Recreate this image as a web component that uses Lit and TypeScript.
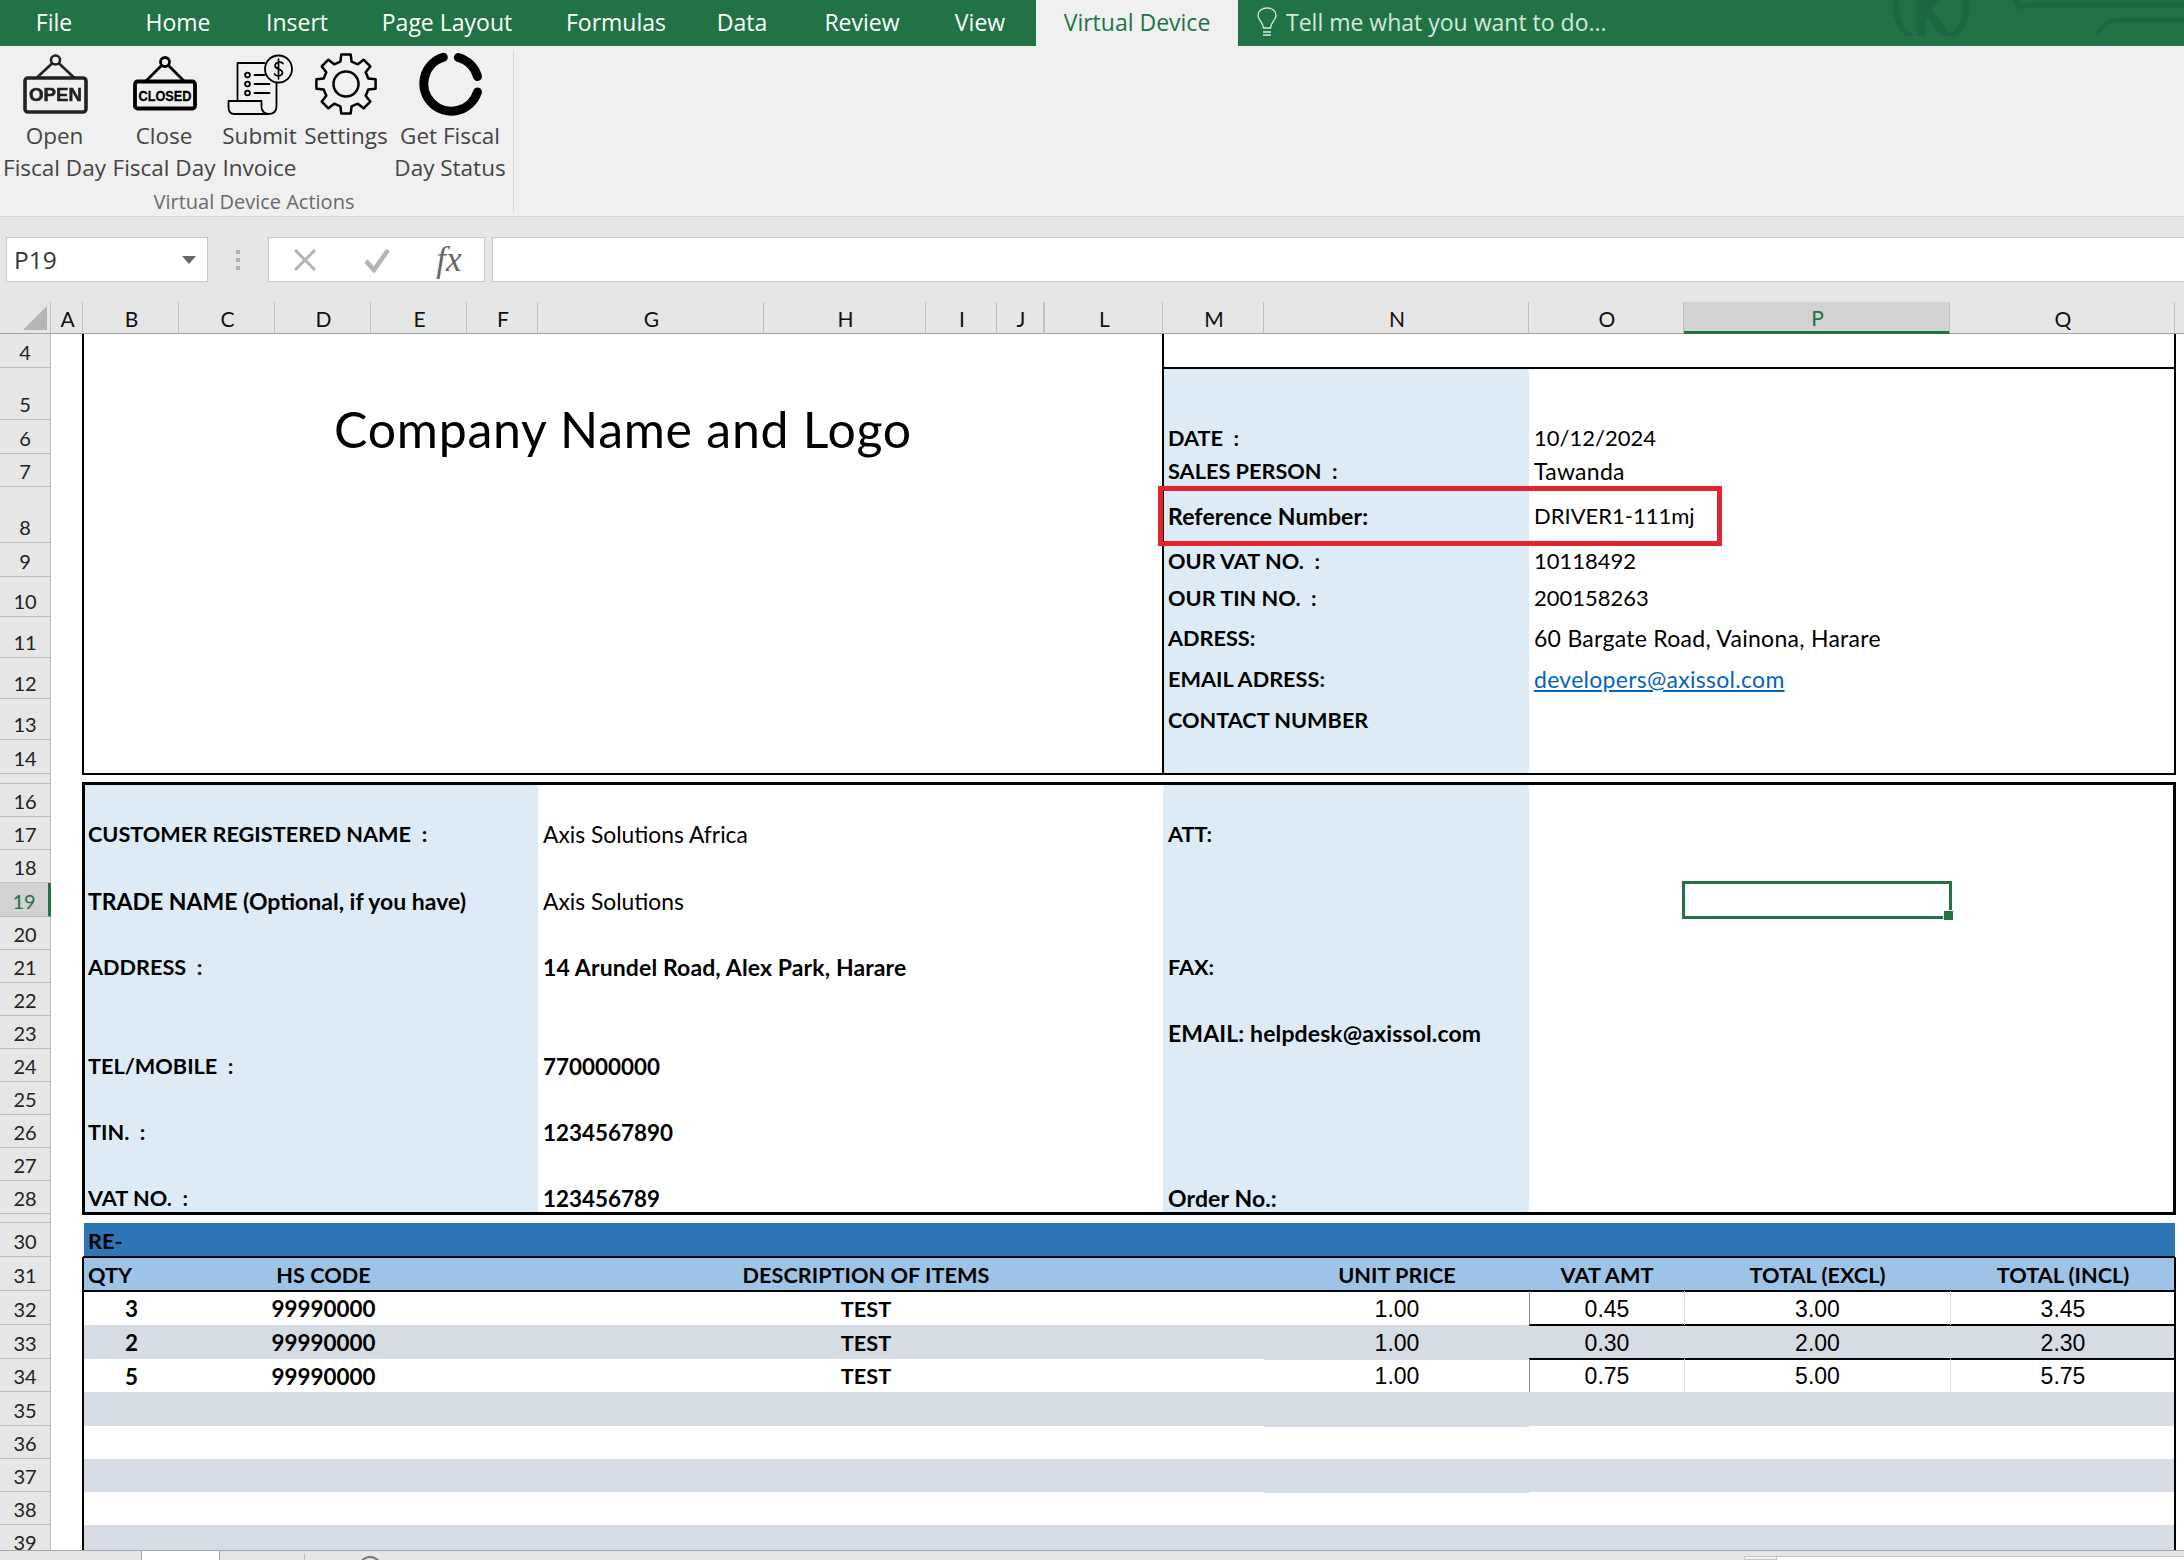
import { LitElement, html, css, svg } from "lit";
import { customElement } from "lit/decorators.js";

const COLS: [string, number][] = [
  ["A", 32], ["B", 96], ["C", 96], ["D", 96], ["E", 96], ["F", 71], ["G", 226], ["H", 162],
  ["I", 71], ["J", 47], ["L", 119], ["M", 101], ["N", 265], ["O", 155], ["P", 266], ["Q", 225],
];
const ROWS: [number, number][] = [
  [4, 34], [5, 52], [6, 34], [7, 33], [8, 56], [9, 34], [10, 40], [11, 41], [12, 41], [13, 41], [14, 34], [15, 10],
  [16, 33], [17, 33], [18, 33], [19, 34], [20, 33], [21, 33], [22, 33], [23, 33], [24, 33], [25, 33], [26, 33], [27, 33], [28, 33],
  [29, 9], [30, 34], [31, 34], [32, 34], [33, 34], [34, 33], [35, 34], [36, 33], [37, 33], [38, 33], [39, 33],
];
const C = (l: string) => COLS.findIndex((c) => c[0] === l) + 2;
const R = (n: number) => ROWS.findIndex((r) => r[0] === n) + 2;
const area = (c1: string, c2: string, r1: number, r2: number = r1) =>
  `grid-area:${R(r1)}/${C(c1)}/${R(r2) + 1}/${C(c2) + 1}`;
const cell = (c1: string, c2: string, r1: number, r2: number, cls: string, content: unknown = "") =>
  html`<div class=${cls} style=${area(c1, c2, r1, r2)}>${content}</div>`;
/* Calibri sets lowercase wider and capitals narrower than Lato: pick a size per text. */
const fit = (s: string) => {
  const lower = (s.match(/[a-z]/g) || []).length;
  const upper = (s.match(/[A-Z]/g) || []).length;
  if (lower + upper === 0) return "";
  return lower / (lower + upper) >= 1 / 3 ? "lc" : "caps";
};
const txt = (c1: string, c2: string, r: number, cls: string, s: string) =>
  cell(c1, c2, r, r, `t ${fit(s)} ${cls}`, s);

const TABS: [string, number][] = [
  ["File", 108], ["Home", 140], ["Insert", 98], ["Page Layout", 202], ["Formulas", 136],
  ["Data", 116], ["Review", 124], ["View", 112],
];

const gearPath = (() => {
  const cx = 346, cy = 84, ro = 30, rr = 23;
  const pts: string[] = [];
  for (let i = 0; i < 8; i++) {
    const a = -90 + i * 45;
    for (const [r, d] of [[rr, -14], [ro, -9], [ro, 9], [rr, 14]] as [number, number][]) {
      const t = ((a + d) * Math.PI) / 180;
      pts.push(`${(cx + r * Math.cos(t)).toFixed(1)} ${(cy + r * Math.sin(t)).toFixed(1)}`);
    }
  }
  return "M" + pts.join("L") + "Z";
})();

const iconOpen = svg`<svg class="ic blur" viewBox="19.5 50 70 70">
  <circle cx="55" cy="60" r="4.5" fill="none" stroke="#222" stroke-width="2.6"/>
  <path d="M52 63 36 78M58 63 74 78" stroke="#222" stroke-width="2.6" fill="none"/>
  <rect x="24.5" y="78" width="61" height="34" rx="3" fill="none" stroke="#222" stroke-width="3.6"/>
  <text x="55" y="100.500" text-anchor="middle" class="sign" textLength="53" lengthAdjust="spacingAndGlyphs" font-size="18" fill="#222" stroke="#222" stroke-width="0.5">OPEN</text>
</svg>`;
const iconClosed = svg`<svg class="ic" viewBox="129 50 70 70">
  <circle cx="165" cy="62" r="4.5" fill="none" stroke="#000" stroke-width="2.8"/>
  <path d="M162 65 146 81M168 65 184 81" stroke="#000" stroke-width="2.8" fill="none"/>
  <rect x="135" y="81.500" width="60" height="27" rx="2.5" fill="none" stroke="#000" stroke-width="3.8"/>
  <text x="165" y="100.500" text-anchor="middle" class="sign" textLength="53" lengthAdjust="spacingAndGlyphs" font-size="15.5" fill="#000" stroke="#000" stroke-width="0.3">CLOSED</text>
</svg>`;
const iconInvoice = svg`<svg class="ic" viewBox="224.500 50 70 70" fill="none" stroke="#000" stroke-width="1.8" stroke-linecap="round" stroke-linejoin="round">
  <path d="M237 101V63H264"/>
  <path d="M276 83V106C276 111 273 114 268 114H234C230 114 228 111 228 107V101H261V107C261 111 264 114 268 114"/>
  <circle cx="278" cy="69" r="13.500"/>
  <path d="M282.500 63.500C281 61.500 275 61.500 274.500 65.500 274 69.500 282.500 68.500 282 73 281.500 76.500 275 76.500 274 74M278 59V79" stroke-width="1.7"/>
  <circle cx="247" cy="75" r="2.4"/><circle cx="247" cy="84" r="2.4"/><circle cx="247" cy="93" r="2.4"/>
  <path d="M254 75H264M254 84H269M254 93H269"/>
</svg>`;
const iconGear = svg`<svg class="ic" viewBox="311 50 70 70" fill="none" stroke="#000" stroke-width="2.5" stroke-linejoin="round">
  <path d=${gearPath}/>
  <circle cx="346" cy="84" r="12.500"/>
</svg>`;
const iconRing = svg`<svg class="ic" viewBox="415 50 70 70" fill="none" stroke="#000" stroke-width="9" stroke-linecap="round">
  <path d="M443.300 57.300A27.500 27.500 0 1 0 477.500 92"/>
  <path d="M458.300 57.500A27.500 27.500 0 0 1 477.500 76.500"/>
</svg>`;

const BTNS: { w: number; icon: unknown; lines: string[] }[] = [
  { w: 109, icon: iconOpen, lines: ["Open", "Fiscal Day"] },
  { w: 110, icon: iconClosed, lines: ["Close", "Fiscal Day"] },
  { w: 81, icon: iconInvoice, lines: ["Submit", "Invoice"] },
  { w: 92, icon: iconGear, lines: ["Settings", ""] },
  { w: 116, icon: iconRing, lines: ["Get Fiscal", "Day Status"] },
];

const RIGHT: [number, string, string][] = [
  [6, "DATE  :", "10/12/2024"],
  [7, "SALES PERSON  :", "Tawanda"],
  [8, "Reference Number:", "DRIVER1-111mj"],
  [9, "OUR VAT NO.  :", "10118492"],
  [10, "OUR TIN NO.  :", "200158263"],
  [11, "ADRESS:", "60 Bargate Road, Vainona, Harare"],
  [13, "CONTACT NUMBER", ""],
];
const CUST: [number, string, string, boolean][] = [
  [17, "CUSTOMER REGISTERED NAME  :", "Axis Solutions Africa", false],
  [19, "TRADE NAME (Optional, if you have)", "Axis Solutions", false],
  [21, "ADDRESS  :", "14 Arundel Road, Alex Park, Harare", true],
  [24, "TEL/MOBILE  :", "770000000", true],
  [26, "TIN.  :", "1234567890", true],
  [28, "VAT NO.  :", "123456789", true],
];
const CUST_R: [number, string][] = [
  [17, "ATT:"], [21, "FAX:"], [23, "EMAIL: helpdesk@axissol.com"], [28, "Order No.:"],
];
const ITEMS: [number, string, string, string, string, string][] = [
  [32, "3", "1.00", "0.45", "3.00", "3.45"],
  [33, "2", "1.00", "0.30", "2.00", "2.30"],
  [34, "5", "1.00", "0.75", "5.00", "5.75"],
];

@customElement("app-root")
export class AppRoot extends LitElement {
  static styles = css`
    :host { display: block; width: 2184px; height: 1560px; overflow: hidden; background: #fff; font-family: "Lato", sans-serif; color: #000; }
    .tabs { height: 46px; background: #217346; display: flex; position: relative; overflow: hidden; font-family: "Open Sans", sans-serif; font-size: 23px; color: #fff; }
    .tab { display: flex; align-items: center; justify-content: center; white-space: nowrap; padding-bottom: 2px; box-sizing: border-box; }
    .tab.active { width: 202px; background: #f0f0f0; color: #217346; }
    .tell { display: flex; align-items: center; gap: 8px; padding-left: 18px; color: #d5e7dc; padding-bottom: 2px; white-space: nowrap; }
    .tell svg { width: 22px; height: 30px; flex: none; }
    .mark { position: absolute; right: 0; top: 0; width: 300px; height: 36px; }
    .ribbon { height: 171px; box-sizing: border-box; background: #f0f0f0; border-bottom: 1px solid #d6d6d6; padding-top: 4px; display: flex; }
    .group { width: 508px; padding-right: 5px; height: 163px; border-right: 1px solid #d9d9d9; display: flex; flex-direction: column; font-family: "Open Sans", sans-serif; }
    .btns { display: flex; height: 133px; }
    .btn { display: flex; flex-direction: column; align-items: center; font-size: 22.5px; color: #444; white-space: nowrap; line-height: 32px; }
    .ic { width: 70px; height: 70px; display: block; flex: none; overflow: visible; }
    .blur { filter: blur(0.7px); }
    .sign { font-family: "Liberation Sans", sans-serif; font-weight: 700; }
    .glabel { text-align: center; font-size: 20px; color: #6a6a6a; line-height: 24px; margin-top: 7px; white-space: nowrap; }
    .fbar { height: 85px; box-sizing: border-box; background: #e6e6e6; display: flex; padding: 20px 0 20px 6px; align-items: stretch; }
    .namebox { width: 202px; box-sizing: border-box; background: #fff; border: 1px solid #c8c8c8; display: flex; align-items: center; justify-content: space-between; padding: 0 11px 0 7px; font-family: "Open Sans", sans-serif; font-size: 24.5px; color: #333; }
    .caret { width: 0; height: 0; border-left: 7px solid transparent; border-right: 7px solid transparent; border-top: 8px solid #666; }
    .dots { width: 60px; display: flex; flex-direction: column; align-items: center; justify-content: center; gap: 4px; }
    .dots i { width: 4px; height: 4px; background: #b0b0b0; display: block; }
    .fbtns { width: 217px; box-sizing: border-box; background: #fff; border: 1px solid #c8c8c8; display: grid; grid-template-columns: repeat(3, 72px); justify-items: center; align-items: center; }
    .fbtns svg { width: 26px; height: 26px; }
    .fx { font-family: "Liberation Serif", serif; font-style: italic; font-size: 35px; color: #666; line-height: 40px; }
    .finput { flex: 1; margin-left: 7px; background: #fff; border: 1px solid #c8c8c8; border-right: 0; }
    .sheet { display: grid; width: 2184px; height: 1248px; overflow: hidden; background: #fff; position: relative; }
    .corner { background: #e6e6e6; border-bottom: 1px solid #a0a0a0; border-right: 1px solid #c0c0c0; display: flex; justify-content: flex-end; align-items: flex-end; padding: 0 3px 3px 0; box-sizing: border-box; }
    .tri { width: 0; height: 0; border-left: 24px solid transparent; border-bottom: 24px solid #b4b4b4; }
    .ch { background: #e6e6e6; border-bottom: 1px solid #a0a0a0; border-right: 1px solid #c0c0c0; box-sizing: border-box; display: flex; align-items: center; justify-content: center; font-size: 21px; color: #111; padding-left: 2px; padding-top: 1px; }
    .ch.sel { background: #d2d2d2; color: #217346; border-bottom: 3px solid #217346; }
    .ch.fill { border-right: 0; }
    .ch.dbl { border-left: 1px solid #c0c0c0; }
    .rh { background: #e6e6e6; border-bottom: 1px solid #bcbcbc; border-right: 1px solid #bcbcbc; box-sizing: border-box; display: flex; align-items: flex-end; justify-content: center; font-size: 20px; line-height: 24px; padding-bottom: 3px; color: #222; }
    .rh.sel { background: #d2d2d2; color: #217346; border-right: 3px solid #217346; }
    .rh.tiny { padding: 0; }
    .blue { background: #ddebf7; }
    .lines { pointer-events: none; border: 0 solid #000; }
    .bl-left { border-left-width: 2px; border-bottom-width: 2px; margin: 0 0 -1px -1px; }
    .bl-right { border-left-width: 2px; border-right-width: 2px; border-bottom-width: 2px; margin: 0 -1px -1px -1px; }
    .bl-hline { border-bottom-width: 2px; margin-bottom: -1px; }
    .bl-cust { border-width: 3px; margin: -2px -1px -1px -1px; }
    .t { display: flex; align-items: center; padding: 1px 0 0 5px; white-space: pre; font-size: 22px; min-width: 0; }
    .t.lc { font-size: 23px; letter-spacing: 0.28px; }
    .t.b { font-weight: 700; font-size: 22.4px; }
    .t.b.lc { font-size: 23px; letter-spacing: 0.12px; }
    .t.b.caps { font-size: 21.7px; }
    .t.b.tight { letter-spacing: 0; }
    .t.lc.soft { font-size: 22.8px; letter-spacing: 0; }
    .t.ct { justify-content: center; padding-left: 1px; }
    .t.num { font-family: "Liberation Sans", sans-serif; font-size: 23px; padding: 2px 0 0 1px; }
    .company { display: flex; align-items: center; justify-content: center; font-size: 50px; letter-spacing: 0.75px; white-space: nowrap; padding-top: 2px; }
    .link { color: #0563c1; text-decoration: underline; }
    .selbox { border: 3px solid #217346; margin: -2px; position: relative; }
    .handle { position: absolute; right: -4px; bottom: -4px; width: 10px; height: 10px; box-sizing: border-box; background: #217346; border-left: 1px solid #fff; border-top: 1px solid #fff; }
    .redbox { position: absolute; left: 1158px; top: 184px; width: 564px; height: 60px; box-sizing: border-box; border: 5px solid #e5232f; }
    .bar { background: #2e75b6; margin-left: 1px; }
    .thead { background: #9dc3e6; border-top: 2px solid #000; border-bottom: 2px solid #000; margin: -1px 0 -1px 0; }
    .gray { background: #d6dce4; }
    .gray.ext { margin-bottom: -1px; }
    .line-b { border-bottom: 2px solid #000; margin-bottom: -1px; }
    .vl { border-left: 1px solid #dcdcdc; }
    .vd { border-left: 1px solid #8a8a8a; }
    .tleft { border-left: 2px solid #000; margin-left: -1px; }
    .tright { border-right: 2px solid #000; margin-right: -1px; }
    .status { height: 10px; background: #e6e6e6; border-top: 1px solid #a6a6a6; box-sizing: border-box; display: flex; overflow: hidden; }
    .st-a { width: 141px; flex: none; }
    .st-tab { width: 79px; flex: none; background: #fff; border-left: 1px solid #a6a6a6; border-right: 1px solid #a6a6a6; box-sizing: border-box; }
    .st-b { width: 85px; flex: none; border-right: 1px solid #bbb; box-sizing: border-box; margin-top: 3px; }
    .st-c { width: 53px; flex: none; }
    .st-plus { width: 24px; height: 24px; flex: none; margin-top: 5px; border: 2px solid #777; border-radius: 50%; box-sizing: border-box; }
    .st-d { flex: 1; }
    .st-e { width: 33px; flex: none; border: 1px solid #c4c4c4; margin-top: 5px; background: #f4f4f4; box-sizing: border-box; }
    .st-f { width: 407px; flex: none; background: #fff; margin-top: 5px; border-top: 1px solid #c4c4c4; }
  `;

  render() {
    const tpl = `51px ${COLS.map((c) => c[1] + "px").join(" ")} 9px`;
    const rowsTpl = `32px ${ROWS.map((r) => r[1] + "px").join(" ")}`;
    return html`
      <div class="tabs">
        ${TABS.map(([t, w]) => html`<div class="tab" style="width:${w}px">${t}</div>`)}
        <div class="tab active">Virtual Device</div>
        <div class="tell">
          <svg viewBox="0 0 22 30" fill="none" stroke="#d5e7dc" stroke-width="1.4"><path d="M7.500 21C7 15 2 13 2 8.500 2 4 6 1 11 1s9 3 9 7.500c0 4.500-5 6.500-5.500 12.500ZM7 25H15M7 28H15"/></svg>
          <span>Tell me what you want to do...</span>
        </div>
        <svg class="mark" viewBox="1884 0 300 36" fill="none" stroke="#1d6840" stroke-width="6">
          <circle cx="1931" cy="8" r="35"/>
          <path d="M1921 -8V36M1921 12 1944 -8M1925 8 1946 36" stroke-width="9"/>
          <path d="M2015 0C2017 8 2024 8 2030 5H2184M2097 36C2102 26 2108 20 2120 20H2184" stroke-width="5"/>
        </svg>
      </div>
      <div class="ribbon">
        <div class="group">
          <div class="btns">
            ${BTNS.map((b) => html`<div class="btn" style="width:${b.w}px">${b.icon}${b.lines.map((l) => html`<div>${l || "\u00a0"}</div>`)}</div>`)}
          </div>
          <div class="glabel">Virtual Device Actions</div>
        </div>
      </div>
      <div class="fbar">
        <div class="namebox"><span>P19</span><i class="caret"></i></div>
        <div class="dots"><i></i><i></i><i></i></div>
        <div class="fbtns">
          <svg viewBox="0 0 26 26" fill="none" stroke="#b4b4b4" stroke-width="3"><path d="M3 3 23 23M23 3 3 23"/></svg>
          <svg viewBox="0 0 26 26" fill="none" stroke="#b4b4b4" stroke-width="4.500"><path d="M2 14 10 23 24 3"/></svg>
          <span class="fx">fx</span>
        </div>
        <div class="finput"></div>
      </div>
      <div class="sheet" style="grid-template-columns:${tpl};grid-template-rows:${rowsTpl}">
        <div class="corner" style="grid-area:1/1/2/2"><i class="tri"></i></div>
        ${COLS.map(([l], i) => html`<div class="ch ${l === "P" ? "sel" : ""} ${l === "L" ? "dbl" : ""}" style="grid-area:1/${i + 2}/2/${i + 3}">${l}</div>`)}
        <div class="ch fill" style="grid-area:1/${COLS.length + 2}/2/${COLS.length + 3}"></div>
        ${ROWS.map(([n, h]) => html`<div class="rh ${n === 19 ? "sel" : ""} ${h < 20 ? "tiny" : ""}" style="grid-area:${R(n)}/1/${R(n) + 1}/2">${h < 20 ? "" : n}</div>`)}

        ${cell("M", "N", 5, 14, "blue")}
        ${cell("B", "F", 16, 28, "blue")}
        ${cell("M", "N", 16, 28, "blue")}
        ${cell("B", "L", 4, 14, "lines bl-left")}
        ${cell("M", "Q", 4, 14, "lines bl-right")}
        ${cell("M", "Q", 4, 4, "lines bl-hline")}
        ${cell("B", "Q", 16, 28, "lines bl-cust")}
        ${cell("B", "L", 5, 7, "company", "Company Name and Logo")}

        ${RIGHT.map(([r, l, v]) => html`
          ${txt("M", "N", r, "b", l)}
          ${txt("O", "Q", r, "", v)}
        `)}
        ${txt("M", "N", 12, "b", "EMAIL ADRESS:")}
        ${cell("O", "Q", 12, 12, "t lc", html`<a class="link">developers@axissol.com</a>`)}
        ${CUST.map(([r, l, v, bold]) => html`
          ${txt("B", "F", r, r === 19 ? "b tight" : "b", l)}
          ${txt("G", "L", r, bold ? "b" : "soft", v)}
        `)}
        ${CUST_R.map(([r, l]) => txt("M", "N", r, "b", l))}

        ${cell("B", "Q", 30, 30, "bar")}
        ${txt("B", "Q", 30, "b", "RE-")}
        ${cell("B", "Q", 31, 31, "thead")}
        ${[33, 35, 37, 39].map((r) => cell("B", "Q", r, r, "gray"))}
        ${[33, 35, 37].map((r) => cell("N", "N", r, r, "gray ext"))}
        ${cell("B", "B", 31, 39, "lines tleft")}
        ${cell("Q", "Q", 31, 39, "lines tright")}
        ${cell("O", "Q", 32, 32, "line-b")}
        ${cell("O", "Q", 33, 33, "line-b")}
        ${[32, 34].map((r) => html`
          ${cell("O", "O", r, r, "vd")}
          ${cell("P", "P", r, r, "vl")}
          ${cell("Q", "Q", r, r, "vl")}
        `)}
        ${txt("B", "B", 31, "b", "QTY")}
        ${txt("C", "E", 31, "b ct", "HS CODE")}
        ${txt("F", "M", 31, "b ct", "DESCRIPTION OF ITEMS")}
        ${txt("N", "N", 31, "b ct", "UNIT PRICE")}
        ${txt("O", "O", 31, "b ct", "VAT AMT")}
        ${txt("P", "P", 31, "b ct", "TOTAL (EXCL)")}
        ${txt("Q", "Q", 31, "b ct", "TOTAL (INCL)")}
        ${ITEMS.map(([r, q, u, v, e, i]) => html`
          ${txt("B", "B", r, "b ct", q)}
          ${txt("C", "E", r, "b ct", "99990000")}
          ${txt("F", "M", r, "b ct", "TEST")}
          ${txt("N", "N", r, "ct num", u)}
          ${txt("O", "O", r, "ct num", v)}
          ${txt("P", "P", r, "ct num", e)}
          ${txt("Q", "Q", r, "ct num", i)}
        `)}
        ${cell("P", "P", 19, 19, "selbox", html`<i class="handle"></i>`)}
        <div class="redbox"></div>
      </div>
      <div class="status">
        <div class="st-a"></div><div class="st-tab"></div><div class="st-b"></div><div class="st-c"></div><div class="st-plus"></div>
        <div class="st-d"></div><div class="st-e"></div><div class="st-f"></div>
      </div>
    `;
  }
}
